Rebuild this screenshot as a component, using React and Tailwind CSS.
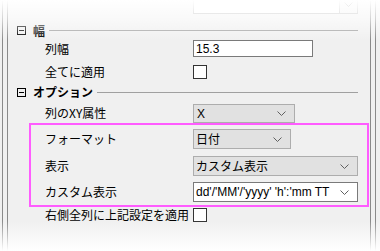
import React from 'react';

const font = { fontFamily: '"Noto Sans CJK JP", "Liberation Sans", sans-serif' };
const latin = { fontFamily: '"Liberation Sans", "Noto Sans CJK JP", sans-serif' };

function Chevron({ className = '' }) {
  return (
    <svg width="9" height="5" viewBox="0 0 9 5" className={className}>
      <path d="M0.5 0.5 L4.5 4.5 L8.5 0.5" fill="none" stroke="#606060" strokeWidth="1" />
    </svg>
  );
}

function Dropdown({ value, width, white, valueStyle }) {
  return (
    <div
      className={`flex h-[20px] items-center justify-between border pl-[2px] pr-[8px] text-[12px] text-black ${
        white ? 'border-[#7a7a7a] bg-white' : 'border-[#adadad] bg-[#e1e1e1]'
      } ${width}`}
    >
      <span className="whitespace-nowrap leading-[16px]" style={valueStyle}>{value}</span>
      <Chevron className="shrink-0" />
    </div>
  );
}

function Checkbox() {
  return <div className="h-[14px] w-[14px] border border-[#333] bg-white" />;
}

function Header({ title }) {
  return (
    <div className="flex items-center pl-[9px]">
      <div className="relative h-[9px] w-[9px] border border-black">
        <div className="absolute left-[1px] right-[1px] top-[3px] h-[1px] bg-black" />
      </div>
      <span className="ml-[7px] text-[12px] font-bold leading-none text-black">{title}</span>
      <div className="ml-[4px] h-[1px] flex-1 bg-[#a0a0a0]" />
    </div>
  );
}

function Row({ label, children, className = '' }) {
  return (
    <div className={`flex items-center ${className}`}>
      <div className="w-[185px] pl-[37px] text-[12px] leading-none text-black whitespace-nowrap">{label}</div>
      {children}
    </div>
  );
}

export default function App() {
  return (
    <div className="relative flex h-[251px] w-[380px] overflow-hidden bg-[#f0f0f0]" style={font}>
      <div className="w-[2px]" />
      <div className="w-[1px] bg-[#8a8a8a]" />
      <div className="w-[4px]" />
      <div className="w-[1px] bg-[#8a8a8a]" />

      <div className="flex w-[362px] flex-col">
        {/* top cut-off dropdown */}
        <div className="h-[22px]">
          <div className="ml-[185px] -mt-[5px] flex h-[19px] w-[165px] border border-[#adadad] bg-white">
            <div className="flex-1" />
            <div className="flex w-[18px] items-center justify-center border-l border-[#adadad] bg-[#f0f0f0]">
              <Chevron />
            </div>
          </div>
        </div>

        <div className="flex h-[17px] items-center pr-[12px]">
          <div className="flex-1">
            <Header title="幅" />
          </div>
        </div>

        <Row label="列幅" className="h-[19px]">
          <div
            className="flex h-[17px] w-[120px] items-center border border-[#7a7a7a] bg-white pl-[2px] text-[12px] leading-none text-black"
            style={latin}
          >
            15.3
          </div>
        </Row>

        <Row label="全てに適用" className="h-[27px]">
          <Checkbox />
        </Row>

        <div className="flex h-[14px] items-center pr-[12px]">
          <div className="flex-1">
            <Header title="オプション" />
          </div>
        </div>

        <div className="flex h-[24px] items-start pt-[5px]">
          <div className="flex h-[18px] w-[185px] items-center pl-[37px] text-[12px] leading-none text-black">列のXY属性</div>
          <div className="flex h-[19px] w-[102px] items-center justify-between border border-[#adadad] bg-[#e1e1e1] pl-[3px] pr-[8px] text-[12px] leading-none text-black">
            <span style={latin}>X</span>
            <Chevron />
          </div>
        </div>

        <div className="ml-[21px] flex h-[84px] w-[340px] flex-col border-2 border-[#ff5cff] pt-[4px]">
          <div className="flex h-[20px] items-center">
            <div className="w-[162px] pl-[14px] text-[12px] leading-none text-black">フォーマット</div>
            <Dropdown value="日付" width="w-[98px]" />
          </div>
          <div className="mt-[7px] flex h-[20px] items-center">
            <div className="w-[162px] pl-[14px] text-[12px] leading-none text-black">表示</div>
            <Dropdown value="カスタム表示" width="w-[165px]" />
          </div>
          <div className="mt-[6px] flex h-[20px] items-center">
            <div className="w-[162px] pl-[14px] text-[12px] leading-none text-black">カスタム表示</div>
            <Dropdown value="dd'/'MM'/'yyyy' 'h':'mm TT" width="w-[165px]" white valueStyle={latin} />
          </div>
        </div>

        <Row label="右側全列に上記設定を適用" className="h-[16px]">
          <Checkbox />
        </Row>
      </div>

      <div className="w-[1px] bg-[#8a8a8a]" />
      <div className="w-[4px]" />
      <div className="w-[1px] bg-[#8a8a8a]" />

      {/* soft fades at top and bottom */}
      <div className="pointer-events-none absolute left-0 right-0 top-0 h-[40px] bg-gradient-to-b from-white via-white/60 to-transparent" />
      <div className="pointer-events-none absolute bottom-0 left-0 right-0 h-[30px] bg-gradient-to-t from-white to-transparent" />
    </div>
  );
}
